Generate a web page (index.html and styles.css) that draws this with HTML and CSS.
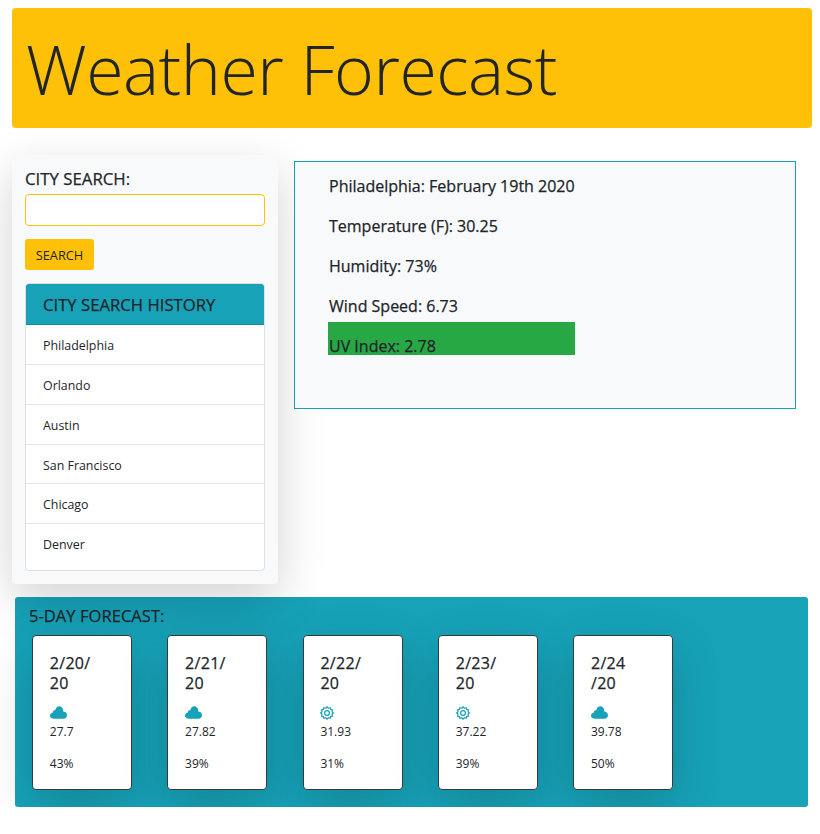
FILE: index.html
```html
<!DOCTYPE html>
<html lang="en">
<head>
    <meta charset="UTF-8">
    <meta name="viewport" content="width=device-width, initial-scale=1.0">
    <title>Weather Forecast</title>
    <link rel="stylesheet" href="styles.css">
</head>
<body>
    <!-- Page title -->
    <header class="jumbotron">
        <h1>Weather Forecast</h1>
    </header>

    <div class="content">
        <!-- Search and history -->
        <aside class="sidebar">
            <label for="city">CITY SEARCH:</label>
            <input type="text" id="city">
            <button type="button">SEARCH</button>
            <div class="history">
                <div class="history-title">CITY SEARCH HISTORY</div>
                <ul>
                    <li>Philadelphia</li>
                    <li>Orlando</li>
                    <li>Austin</li>
                    <li>San Francisco</li>
                    <li>Chicago</li>
                    <li>Denver</li>
                </ul>
            </div>
        </aside>

        <!-- Current weather -->
        <section class="current">
            <p>Philadelphia: February 19th 2020</p>
            <p>Temperature (F): 30.25</p>
            <p>Humidity: 73%</p>
            <p>Wind Speed: 6.73</p>
            <p class="uv">UV Index: 2.78</p>
        </section>
    </div>

    <!-- Forecast cards -->
    <section class="forecast">
        <h2>5-DAY FORECAST:</h2>
        <div class="cards">
            <div class="day">
                <h3>2/20/<br>20</h3>
                <svg class="icon" viewBox="0 0 18 13"><path d="M3.500 13C1.500 13 0 11.600 0 9.800 0 8.100 1.200 6.900 2.800 6.700 3 4.900 4.300 3.800 5.700 3.800 6.300 1.500 7.800 0 9.800 0c2.300 0 4 1.800 4.200 4.300 0 .4 0 .8-.1 1.100 2.300 0 4.100 1.700 4.100 3.900S16.300 13 14.500 13Z"/></svg>
                <p>27.7</p>
                <p>43%</p>
            </div>
            <div class="day">
                <h3>2/21/<br>20</h3>
                <svg class="icon" viewBox="0 0 18 13"><path d="M3.500 13C1.500 13 0 11.600 0 9.800 0 8.100 1.200 6.900 2.800 6.700 3 4.900 4.300 3.800 5.700 3.800 6.300 1.500 7.800 0 9.800 0c2.300 0 4 1.800 4.200 4.300 0 .4 0 .8-.1 1.100 2.300 0 4.100 1.700 4.100 3.900S16.300 13 14.500 13Z"/></svg>
                <p>27.82</p>
                <p>39%</p>
            </div>
            <div class="day">
                <h3>2/22/<br>20</h3>
                <svg class="icon gear" viewBox="0 0 14 14"><path d="M7 .8 8.300 2.300 10.200 1.700 10.700 3.400 12.500 3.900 12 5.800 13.300 7 12 8.200 12.500 10.100 10.700 10.600 10.200 12.300 8.300 11.700 7 13.200 5.700 11.700 3.800 12.300 3.300 10.600 1.500 10.100 2 8.200.7 7 2 5.800 1.500 3.900 3.300 3.400 3.800 1.700 5.700 2.300Z"/><circle cx="7" cy="7" r="2.400"/></svg>
                <p>31.93</p>
                <p>31%</p>
            </div>
            <div class="day">
                <h3>2/23/<br>20</h3>
                <svg class="icon gear" viewBox="0 0 14 14"><path d="M7 .8 8.300 2.300 10.200 1.700 10.700 3.400 12.500 3.900 12 5.800 13.300 7 12 8.200 12.500 10.100 10.700 10.600 10.200 12.300 8.300 11.700 7 13.200 5.700 11.700 3.800 12.300 3.300 10.600 1.500 10.100 2 8.200.7 7 2 5.800 1.500 3.900 3.300 3.400 3.800 1.700 5.700 2.300Z"/><circle cx="7" cy="7" r="2.400"/></svg>
                <p>37.22</p>
                <p>39%</p>
            </div>
            <div class="day">
                <h3>2/24<br>/20</h3>
                <svg class="icon" viewBox="0 0 18 13"><path d="M3.500 13C1.500 13 0 11.600 0 9.800 0 8.100 1.200 6.900 2.800 6.700 3 4.900 4.300 3.800 5.700 3.800 6.300 1.500 7.800 0 9.800 0c2.300 0 4 1.800 4.200 4.300 0 .4 0 .8-.1 1.100 2.300 0 4.100 1.700 4.100 3.900S16.300 13 14.500 13Z"/></svg>
                <p>39.78</p>
                <p>50%</p>
            </div>
        </div>
    </section>
</body>
</html>
```

FILE: styles.css
```css
body {
    margin: 0;
    padding: 8px 8px 0 12px;
    font-family: "Open Sans", "Noto Sans", sans-serif;
    color: #212529;
    background-color: #fff;
}

/* Title */
.jumbotron {
    background-color: #ffc107;
    border-radius: 4px;
    height: 120px;
    padding-left: 14px;
    margin-bottom: 27px;
}

h1 {
    margin: 0;
    font-size: 68px;
    font-weight: 300;
    line-height: 121px;
    letter-spacing: -0.5px;
}

.content {
    display: flex;
    align-items: flex-start;
    height: 429px;
    margin-bottom: 13px;
}

/* Sidebar */
.sidebar {
    box-sizing: border-box;
    width: 266px;
    height: 429px;
    padding: 12px 13px 0;
    background-color: #f8f9fa;
    border-radius: 4px;
    box-shadow: 0 16px 48px rgba(0, 0, 0, 0.175);
}

label {
    display: block;
    font-size: 16.8px;
    -webkit-text-stroke: 0.25px;
    line-height: 24px;
    margin-bottom: 3px;
}

input {
    display: block;
    box-sizing: border-box;
    width: 100%;
    height: 32px;
    border: 1px solid #ffc107;
    border-radius: 4px;
    background-color: #fff;
    margin-bottom: 13px;
}

button {
    display: block;
    width: 69px;
    height: 31px;
    padding: 0;
    border: none;
    border-radius: 3px;
    background-color: #ffc107;
    color: #212529;
    font-family: inherit;
    font-size: 12.8px;
    margin-bottom: 13px;
}

.history {
    border: 1px solid #dfdfdf;
    border-radius: 4px;
    overflow: hidden;
    background-color: #fff;
}

.history-title {
    box-sizing: border-box;
    height: 41px;
    padding-left: 17px;
    background-color: #17a2b8;
    border-bottom: 1px solid #148c9f;
    font-size: 16.7px;
    -webkit-text-stroke: 0.25px;
    line-height: 41px;
}

.history ul {
    list-style: none;
    margin: 0;
    padding: 0;
}

.history li {
    box-sizing: border-box;
    height: 39.7px;
    padding-left: 17px;
    border-top: 1px solid #e6e6e6;
    font-size: 12.4px;
    line-height: 41.4px;
}

.history li:first-child {
    height: 39.2px;
    border-top-color: #fff;
    line-height: 40px;
}

.history li:last-child {
    height: 47px;
}

/* Current weather */
.current {
    box-sizing: border-box;
    width: 502px;
    height: 248px;
    margin: 6px 0 0 16px;
    padding: 8px 0 0 33px;
    background-color: #f8f9fa;
    border: 1px solid #17a2b8;
}

.current p {
    width: 247px;
    margin: 0;
    height: 40px;
    padding-left: 1px;
    box-sizing: border-box;
    font-size: 16px;
    -webkit-text-stroke: 0.25px;
    line-height: 32px;
}

.current p.uv {
    height: 33px;
    margin-top: -8px;
    padding-top: 16px;
    background-color: #28a745;
    line-height: 17px;
}

/* Forecast */
.forecast {
    box-sizing: border-box;
    width: 793px;
    height: 210px;
    margin-left: 3px;
    padding: 8px 0 0 14px;
    background-color: #17a2b8;
    border-radius: 3px;
}

h2 {
    margin: 0 0 9px;
    font-size: 16.6px;
    font-weight: 400;
    -webkit-text-stroke: 0.25px;
    line-height: 21px;
}

.cards {
    display: flex;
    gap: 35.3px;
    padding-left: 3px;
}

.day {
    box-sizing: border-box;
    width: 100px;
    height: 155px;
    padding: 17px 0 0 16.8px;
    background-color: #fff;
    border: 1px solid #343a40;
    border-radius: 4px;
    box-shadow: 0 16px 48px rgba(0, 0, 0, 0.175);
}

h3 {
    margin: 0 0 13px;
    font-size: 16px;
    font-weight: 400;
    letter-spacing: 0.3px;
    -webkit-text-stroke: 0.25px;
    line-height: 20px;
}

.icon {
    display: block;
    width: 17px;
    height: 13px;
    fill: #17a2b8;
    margin-bottom: 5px;
}

.icon.gear {
    width: 14px;
    height: 14px;
    margin-bottom: 4px;
    fill: none;
    stroke: #17a2b8;
    stroke-width: 1.2;
}

.day p {
    margin: 0 0 16px;
    font-size: 12px;
    line-height: 16px;
}
```
